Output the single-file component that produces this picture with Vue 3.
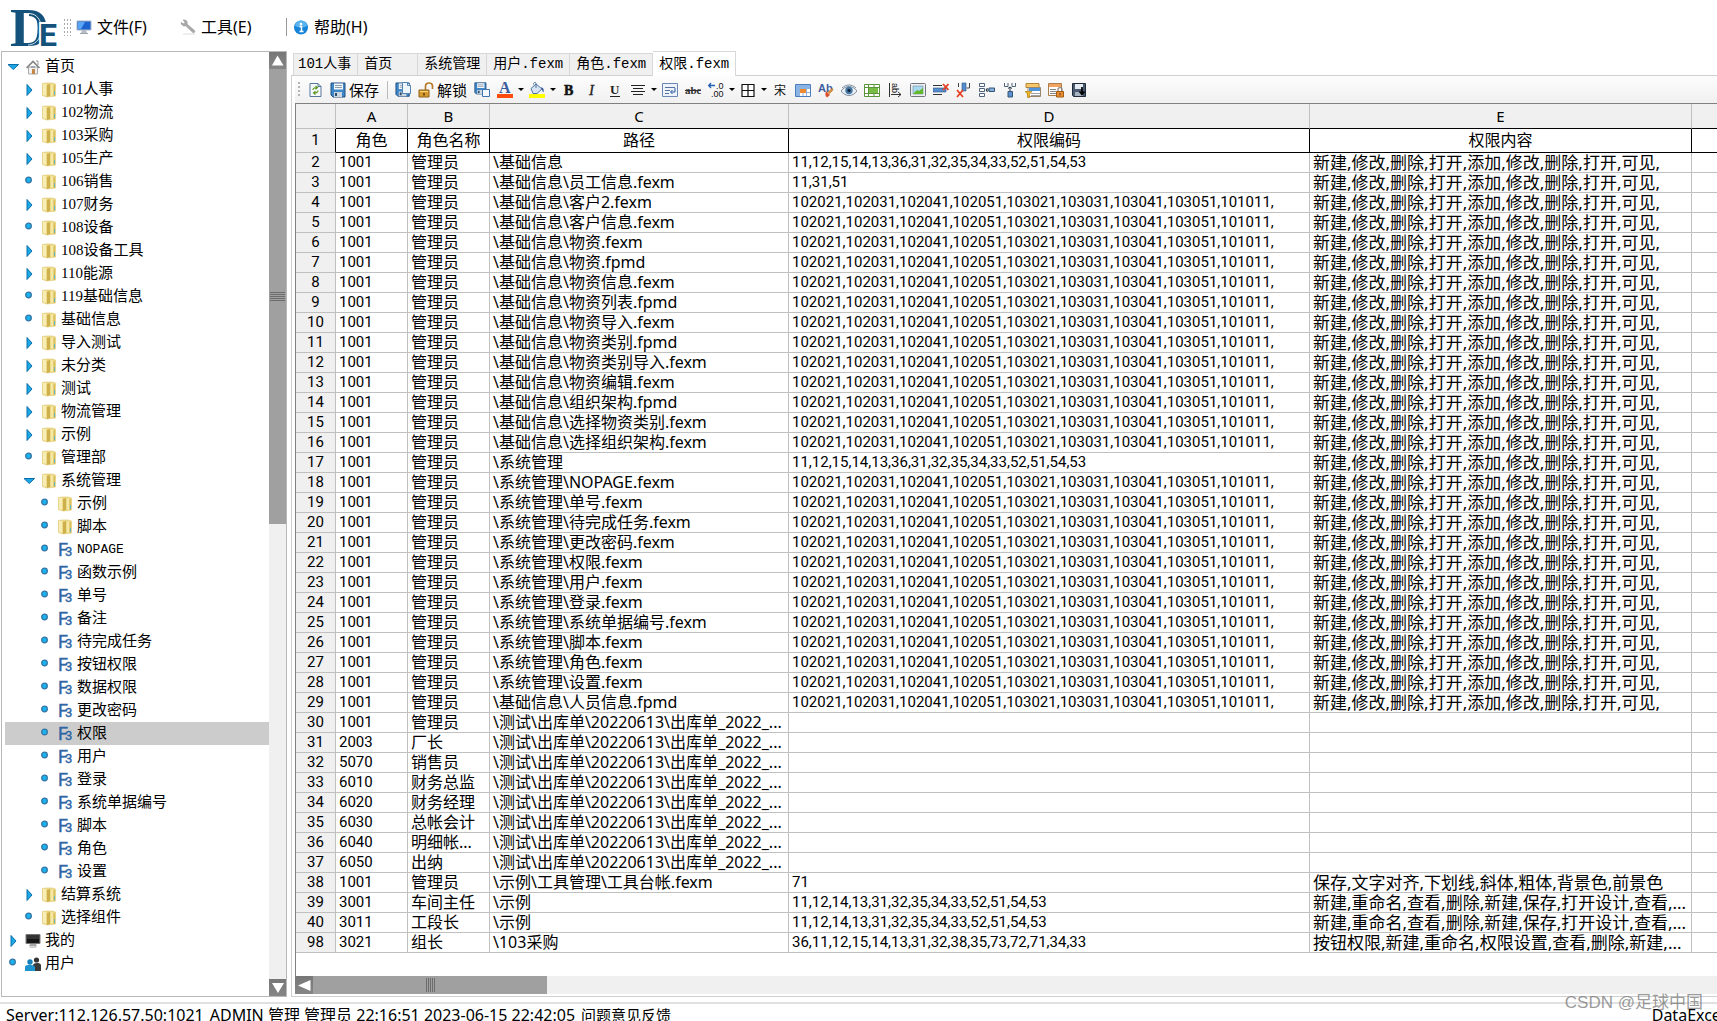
<template>
  <div class="app">
    <header class="menu-bar">
      <svg class="logo" viewBox="0 0 48 48" width="48" height="48" role="img" aria-label="DE">
        <text class="logo-d" x="0" y="43">D</text>
        <path d="M19 12c15 0 15 29 0 29" fill="none" stroke="#14527c" stroke-width="2" />
        <path d="M18 10.500c18-1 18 31 0 31.500" fill="none" stroke="#fff" stroke-width=".8" />
        <text class="logo-e" x="29" y="43">E</text>
      </svg>
      <span class="menu-grip"></span>
      <button class="menu-item menu-item--file" type="button">
        <svg viewBox="0 0 16 16" width="16" height="16" v-html="icons.monitor"></svg>文件(F)
      </button>
      <button class="menu-item menu-item--tool" type="button">
        <svg viewBox="0 0 16 16" width="16" height="16" v-html="icons.wrench"></svg>工具(E)
      </button>
      <span class="menu-line"></span>
      <button class="menu-item" type="button">
        <svg viewBox="0 0 16 16" width="16" height="16" v-html="icons.info"></svg>帮助(H)
      </button>
    </header>

    <main class="main">
      <aside class="sidebar">
        <ul class="tree">
          <li
            v-for="(node, i) in nodes"
            :key="i"
            class="tree__row"
            :class="[`tree__row--l${node.level}`, { 'tree__row--active': i === activeNode }]"
            @click="activeNode = i"
          >
            <svg class="tree__mark" viewBox="0 0 16 16" width="16" height="16" v-html="icons[node.mark]"></svg>
            <svg class="tree__icon" viewBox="0 0 16 16" width="16" height="16" v-html="icons[node.icon]"></svg>
            <span :class="{ mono: node.mono }">{{ node.text }}</span>
          </li>
        </ul>
        <div class="vscroll">
          <button class="scroll-btn" type="button" aria-label="向上">
            <svg viewBox="0 0 17 17" width="17" height="17"><path d="M8.500 3.500 14.500 13.500H3z" fill="#fff" /></svg>
          </button>
          <div class="vscroll__track">
            <div class="vscroll__thumb"><i v-for="n in 5" :key="n"></i></div>
          </div>
          <button class="scroll-btn" type="button" aria-label="向下">
            <svg viewBox="0 0 17 17" width="17" height="17"><path d="M3 4H15L9 14z" fill="#fff" /></svg>
          </button>
        </div>
      </aside>

      <section class="content">
        <div class="tabs" role="tablist">
          <button
            v-for="(tab, i) in tabs"
            :key="tab"
            class="tab"
            :class="{ 'tab--active': i === activeTab }"
            type="button"
            role="tab"
            :aria-selected="i === activeTab"
            @click="activeTab = i"
          >{{ tab }}</button>
        </div>

        <div class="panel">
          <div class="toolbar">
            <span class="toolbar__grip"></span>
            <template v-for="(tool, i) in tools" :key="i">
              <span v-if="tool.icon === 'sep'" class="toolbar__sep"></span>
              <button v-else-if="tool.icon === 'caret'" class="caret" type="button" aria-label="更多"></button>
              <button v-else class="tool" type="button" :aria-label="tool.name">
                <svg viewBox="0 0 16 16" width="16" height="16" v-html="icons[tool.icon]"></svg>
                <span v-if="tool.text" class="tool__text">{{ tool.text }}</span>
              </button>
            </template>
          </div>

          <div class="sheet">
            <table class="grid">
              <colgroup>
                <col class="col-n" /><col class="col-a" /><col class="col-b" /><col class="col-c" />
                <col class="col-d" /><col class="col-e" /><col />
              </colgroup>
              <thead>
                <tr>
                  <th class="corner"></th>
                  <th v-for="c in ['A', 'B', 'C', 'D', 'E', '']" :key="c" scope="col">{{ c }}</th>
                </tr>
              </thead>
              <tbody>
                <tr class="title-row">
                  <th scope="row">1</th>
                  <td>角色</td>
                  <td>角色名称</td>
                  <td>路径</td>
                  <td>权限编码</td>
                  <td>权限内容</td>
                  <td></td>
                </tr>
                <tr v-for="row in rows" :key="row[0]">
                  <th scope="row">{{ row[0] }}</th>
                  <td class="num">{{ row[1] }}</td>
                  <td>{{ row[2] }}</td>
                  <td>{{ row[3] }}</td>
                  <td class="num">{{ row[4] }}</td>
                  <td class="perm">{{ row[5] }}</td>
                  <td></td>
                </tr>
              </tbody>
            </table>
          </div>

          <div class="hscroll">
            <button class="scroll-btn scroll-btn--left" type="button" aria-label="向左">
              <svg viewBox="0 0 18 18" width="18" height="18"><path d="M3 9.500 15.500 4V15z" fill="#fff" /></svg>
            </button>
            <div class="hscroll__track">
              <div class="hscroll__thumb"><i v-for="n in 5" :key="n"></i></div>
            </div>
          </div>
        </div>
      </section>
    </main>

    <footer class="status">
      <span>Server:112.126.57.50:1021</span>
      <span>ADMIN 管理 管理员 22:16:51 2023-06-15 22:42:05</span>
      <a href="#">问题意见反馈</a>
      <span class="status__brand">DataExcel</span>
    </footer>
    <div class="watermark">CSDN @足球中国</div>
  </div>
</template>

<script setup>
import { ref } from 'vue'

const floppy = (x, y, s) =>
  `<g transform="translate(${x} ${y}) scale(${s})"><path d="M1 1h14v14H3l-2-2z" fill="#3d86c8" stroke="#24507f"/><path d="M4 1.500h9v6H4z" fill="#f4f8fc"/><path d="M5 3.500h7M5 5.500h7" stroke="#8a9aaa"/><path d="M4 10h8v5H4z" fill="#cdd6de"/><path d="M5 11h2v3H5z" fill="#2c4d70"/></g>`

const icons = {
  monitor:
    '<path d="M1 2h14v9H1z" fill="#1c63cf" stroke="#a9b7c6"/><path d="M2 3h7L5 10H2z" fill="#5aa6f4"/><path d="M6 11h4l1 3H5z" fill="#b7bec6"/><path d="M4 14.500h8" stroke="#9aa2aa"/>',
  wrench:
    '<path d="M1 3.500 4 5l1-2-2-2c3-.6 5 1.300 4 4l7.500 6.500c1 1.500-.8 3-2 1.800L5.800 6.800C3.600 7.600 1.300 6.300 1 3.500z" fill="#a9a9a9" stroke="#8a8a8a" stroke-width=".5"/><path d="M3 15h12" stroke="#ddd"/>',
  info:
    '<circle cx="8" cy="8.500" r="7" fill="#1684d6"/><path d="M2 7a6 5.500 0 0 1 12 0c-4 2-8 2-12 0z" fill="#59b4ee"/><circle cx="8" cy="5" r="1.300" fill="#fff"/><path d="M6.500 7.500h2v5M6.500 12.500h4" fill="none" stroke="#fff" stroke-width="1.500"/>',
  open: '<path d="M3 5.500h10.500L8.300 10.500z" fill="#1ba8e8" stroke="#0c6ea8"/>',
  closed: '<path d="M6 2.500 11 8 6 13.500z" fill="#1ba8e8" stroke="#0c6ea8"/>',
  dot: '<circle cx="7.500" cy="6" r="2.800" fill="#19b4ee" stroke="#3474a6" stroke-width="1.300"/>',
  home:
    '<path d="M3.500 8h9v7h-9z" fill="#f2f2f2" stroke="#a9a9a9"/><path d="M1.500 9 8 2.500 14.500 9" fill="none" stroke="#858585" stroke-width="1.700"/><path d="M11 2h2v4" fill="none" stroke="#999"/><path d="M7 10h3v5H7z" fill="#c4874a"/><path d="M6 7h4v2H6z" fill="#9fa7ad"/>',
  folder:
    '<path d="M1.500 1.500 6 1h5l3.500 1v12L6 15l-4.500-1.500z" fill="#ecd98a" stroke="#e2cc75" stroke-width=".7"/><path d="M2 2h3v11.500L2 13z" fill="#f8edb4"/><path d="M6 3 9 2v12l-3 1z" fill="#cdb04c"/><path d="M10 2.500h2v11h-2z" fill="#f5e7a4"/><path d="M12.500 3H14v11h-1.500z" fill="#dabf58"/><path d="M13.500 9v4" stroke="#62b5c4"/>',
  form: '<text x="1" y="14" font-family="Roboto, sans-serif" font-size="18" fill="#2f66a5" stroke="#2f66a5" stroke-width=".4">F</text><text x="8" y="14" font-family="Roboto, sans-serif" font-size="13" fill="#2f66a5" stroke="#2f66a5" stroke-width=".4">3</text>',
  computer:
    '<path d="M1 1.500h14v9H1z" fill="#343434" stroke="#777"/><path d="M2 6h12v4H2z" fill="#161616"/><path d="M5 11h6l1 2.500H4z" fill="#a7a7a7"/><path d="M5 14.500h6" stroke="#ccc"/>',
  users:
    '<circle cx="11.500" cy="4" r="2.600" fill="#333"/><path d="M8 15V9c0-2 7-3 8 0v6z" fill="#3a3a3a"/><circle cx="5" cy="6" r="2.700" fill="#1780b9"/><path d="M0 15v-4c0-3 9-3 10 0v4z" fill="#1c93cc"/>',
  refresh:
    '<path d="M3 1.500h8l3 3v10H3z" fill="#f6fafd" stroke="#56779a"/><path d="M11 1.500v3h3" fill="none" stroke="#56779a"/><path d="M6 8c0-2 2-2.500 4-2.500M8.500 4l2 1.500-2 1.800M11 8.500c0 2-2 2.500-4 2.500M8.500 9.200 6.500 11l2 1.600" fill="none" stroke="#5d9a22" stroke-width="1.200"/>',
  save: floppy(0, 0, 1),
  saveDoc:
    floppy(0, 0, 0.95) + '<path d="M7.500.5h5l3 3v8h-8z" fill="#eef5fc" stroke="#5484b6"/><path d="M12.500.5v3h3" fill="none" stroke="#5484b6"/>',
  unlock:
    '<path d="M7.500 8V4c0-4 7-4 7 0v3" fill="none" stroke="#b57b2c" stroke-width="1.700"/><path d="M1 8h10v7H1z" fill="#d79a2c" stroke="#90601b"/><path d="M2 9.500h8" stroke="#f6d67a"/><path d="M6 11v2.500" stroke="#5a3a10" stroke-width="1.500"/>',
  saveCopy: floppy(0, 0, 0.8) + '<path d="M8.500 7.500h7v7h-7z" fill="#f5f9fd" stroke="#3e75af"/>',
  fontColor:
    '<text x="2" y="11" font-family="Liberation Serif, serif" font-weight="700" font-size="16" fill="#395a9b">A</text><path d="M0 12h16v4H0z" fill="#ff4c0c"/>',
  fill:
    '<path d="M2 6.500 7 2l6 5-5 4.500H4z" fill="#d5e3f2" stroke="#4d73a4"/><path d="M7 6V1.500c0-2-3-1-2.500 1" fill="none" stroke="#54749b"/><path d="M12 5c3 1 3 3 2.500 5.500-1.500-1-1-3-2.500-5.500z" fill="#355d9d"/><path d="M0 12h16v4H0z" fill="#ff0"/>',
  bold: '<text x="3" y="13" font-family="Liberation Serif, serif" font-weight="700" font-size="14" fill="#111" stroke="#111" stroke-width=".5">B</text>',
  italic: '<text x="5" y="13" font-family="Liberation Serif, serif" font-style="italic" font-size="15" fill="#222" stroke="#222" stroke-width=".3">I</text>',
  underline:
    '<text x="3" y="12" font-family="Liberation Serif, serif" font-weight="700" font-size="13" fill="#222">U</text><path d="M3 14.500h10" stroke="#222"/>',
  align: '<path d="M1 3.500h14M3 6.500h10M1 9.500h14M3 12.500h10" stroke="#222" stroke-width="1.200"/>',
  wrap:
    '<path d="M.5 1.500h15v13H.5z" fill="#eef3fa" stroke="#6d87b5"/><path d="M3 5.500h10M3 8.500h5M3 11.500h4" stroke="#58729f"/><path d="M13 6v4H9M10.500 8l-2 2 2 2" fill="none" stroke="#2659a5"/>',
  strike:
    '<text x="0" y="12" font-family="Liberation Serif, serif" font-weight="700" font-size="11" fill="#333">abc</text><path d="M0 8.500h16" stroke="#333"/>',
  decimal:
    '<text x="8" y="7" font-family="Liberation Sans, sans-serif" font-size="9" fill="#111">.0</text><text x="3" y="15" font-family="Liberation Sans, sans-serif" font-size="9" fill="#111">.00</text><path d="M7 3.500H1M3 1 .7 3.500 3 6" fill="none" stroke="#2360b5" stroke-width="1.300"/>',
  border: '<path d="M2 2.500h12v12H2zM8 2.500v12M2 8.500h12" fill="#fff" stroke="#111" stroke-width="1.200"/>',
  font: '<text x="2" y="13" font-family="Noto Sans CJK SC, sans-serif" font-size="12" fill="#111">宋</text>',
  table:
    '<path d="M.5 2.500h15v12H.5z" fill="#fff" stroke="#4c7dbd"/><path d="M1 3h14v3H1zM1 3h3v11H1z" fill="#8ab4e8"/><path d="M1 6.500h14M1 10.500h14M4.500 3v11M8 3v11M11.500 3v11" stroke="#8fb2dc"/><path d="M5 7h6v4H5z" fill="#f18a2e"/>',
  style:
    '<text x="0" y="10" font-family="Liberation Sans, sans-serif" font-weight="700" font-size="11" fill="#3c5fa0">Ab</text><path d="m14.500 6 1 2-4 4-2-2z" fill="#d58a3d"/><path d="m8 9 4 4-3 2.500C7 14 7 12 8 9z" fill="#d9502c"/>',
  eye:
    '<path d="M0 9c4-6 12-6 16 0-4 6-12 6-16 0z" fill="#e8edf2" stroke="#8090a2"/><circle cx="8" cy="8.500" r="3.700" fill="#487aa8"/><circle cx="8" cy="8.500" r="1.700" fill="#172b40"/><path d="M1 6c4-4 10-4 14 0" fill="none" stroke="#8090a2"/>',
  merge:
    '<path d="M.5 2.500h15v12H.5z" fill="#fff" stroke="#5a9438"/><path d="M.5 5.500h15M.5 11.500h15M4.500 2.500v12M10 2.500v3M10 11.500v3" stroke="#5a9438"/><path d="M5 6h9v5H5z" fill="#77bd43"/>',
  rotate:
    '<path d="M2.500 1v14" stroke="#333"/><text transform="translate(5 1) rotate(90)" x="0" y="0" font-family="Liberation Sans, sans-serif" font-size="9" fill="#111">ab</text><path d="M4 12.500h10M11 10l3 2.500-3 2.500" fill="none" stroke="#333"/>',
  picture:
    '<rect x=".5" y="1.500" width="15" height="13" rx="1" fill="#eee" stroke="#6e7580"/><path d="M3 4h10v8H3z" fill="#a8d7f1" stroke="#6b8b9e" stroke-width=".6"/><path d="m3 12 4-4 2 1 4-3v6z" fill="#62b72d"/>',
  delRow:
    '<path d="M0 3.500h9M0 12.500h9" stroke="#333"/><path d="M0 6h13v4H0z" fill="#568dcc" stroke="#2c5688" stroke-width=".6"/><path d="m10 2 5.500 6M15.500 2 10 8" stroke="#e63c20" stroke-width="1.700"/>',
  delCol:
    '<path d="M2.500 1v4M13.500 1v5h-3" fill="none" stroke="#444"/><path d="M6 1h4v8H6z" fill="#568dcc" stroke="#2c5688" stroke-width=".6"/><path d="m1 8 6 7M7 8l-6 7" stroke="#e63c20" stroke-width="1.800"/>',
  insRow:
    '<path d="M.5 1.500h5v3h-5zM.5 6.500h5v3h-5zM.5 11.500h5v3h-5z" fill="#fff" stroke="#50657c"/><path d="M10 6h5.500v3.500H10z" fill="#83afd9" stroke="#345779"/><path d="M10 8H7M8.500 6 7 8l1.500 2" fill="none" stroke="#234"/>',
  insCol:
    '<path d="M2.500 1v3.500H6V1M10 1v3.500h3.500V1" fill="none" stroke="#50657c"/><path d="M6 9.500h4.500V15H6z" fill="#5d91cd" stroke="#345779"/><path d="M8 9V5M6 6.500 8 5l2 1.500" fill="none" stroke="#234"/>',
  filter:
    '<path d="M1 1.500h13v4H1z" fill="#f7c86b" stroke="#b58333"/><path d="M3 5.500h12.500v9H3z" fill="#fff" stroke="#9a876a"/><path d="M4 6h11v3H4z" fill="#4f94df"/><path d="M6 11.500h9M6 13.500h9" stroke="#a2a2a2"/><path d="M0 9.500h7L4.500 12v3.500h-2V12z" fill="#f2b51d" stroke="#a87509" stroke-width=".6"/>',
  lockTable:
    '<path d="M.5 1.500h13v12H.5z" fill="#fff" stroke="#a97e4e"/><path d="M1 2h12v3H1z" fill="#f2a35f"/><path d="M2 7.500h6M2 9.500h6M2 11.500h6" stroke="#888"/><path d="M10 9V7.500c0-2.500 4-2.500 4 0V9" fill="none" stroke="#888" stroke-width="1.300"/><path d="M8.500 9.500h7v5.500h-7z" fill="#e89031" stroke="#a25b11"/><path d="M12 11v2.500" stroke="#633"/>',
  exportFile:
    '<path d="M1.500 1.500h13v13h-12l-1-1z" fill="#4a5b72" stroke="#202b3a"/><path d="M4 2h8v5H4z" fill="#e4ebf3"/><path d="M4 10h8v4H4z" fill="#a8b4c2"/><path d="M11 5v7M8.500 9.500 11 12.500l2.500-3" fill="none" stroke="#000" stroke-width="1.700"/>'
}

const node = (level, mark, icon, text) => ({ level, mark, icon, text })

const nodes = [
  node(0, 'open', 'home', '首页'),
  node(1, 'closed', 'folder', '101人事'),
  node(1, 'closed', 'folder', '102物流'),
  node(1, 'closed', 'folder', '103采购'),
  node(1, 'closed', 'folder', '105生产'),
  node(1, 'dot', 'folder', '106销售'),
  node(1, 'closed', 'folder', '107财务'),
  node(1, 'dot', 'folder', '108设备'),
  node(1, 'closed', 'folder', '108设备工具'),
  node(1, 'closed', 'folder', '110能源'),
  node(1, 'dot', 'folder', '119基础信息'),
  node(1, 'dot', 'folder', '基础信息'),
  node(1, 'closed', 'folder', '导入测试'),
  node(1, 'closed', 'folder', '未分类'),
  node(1, 'closed', 'folder', '测试'),
  node(1, 'closed', 'folder', '物流管理'),
  node(1, 'closed', 'folder', '示例'),
  node(1, 'dot', 'folder', '管理部'),
  node(1, 'open', 'folder', '系统管理'),
  node(2, 'dot', 'folder', '示例'),
  node(2, 'dot', 'folder', '脚本'),
  { ...node(2, 'dot', 'form', 'NOPAGE'), mono: true },
  node(2, 'dot', 'form', '函数示例'),
  node(2, 'dot', 'form', '单号'),
  node(2, 'dot', 'form', '备注'),
  node(2, 'dot', 'form', '待完成任务'),
  node(2, 'dot', 'form', '按钮权限'),
  node(2, 'dot', 'form', '数据权限'),
  node(2, 'dot', 'form', '更改密码'),
  node(2, 'dot', 'form', '权限'),
  node(2, 'dot', 'form', '用户'),
  node(2, 'dot', 'form', '登录'),
  node(2, 'dot', 'form', '系统单据编号'),
  node(2, 'dot', 'form', '脚本'),
  node(2, 'dot', 'form', '角色'),
  node(2, 'dot', 'form', '设置'),
  node(1, 'closed', 'folder', '结算系统'),
  node(1, 'dot', 'folder', '选择组件'),
  node(0, 'closed', 'computer', '我的'),
  node(0, 'dot', 'users', '用户')
]
const activeNode = ref(29)

const tabs = ['101人事', '首页', '系统管理', '用户.fexm', '角色.fexm', '权限.fexm']
const activeTab = ref(5)

const tools = [
  { icon: 'refresh', name: '刷新' },
  { icon: 'save', text: '保存' },
  { icon: 'sep' },
  { icon: 'saveDoc', name: '另存为' },
  { icon: 'unlock', text: '解锁' },
  { icon: 'saveCopy', name: '保存副本' },
  { icon: 'fontColor', name: '前景色' },
  { icon: 'caret' },
  { icon: 'fill', name: '背景色' },
  { icon: 'caret' },
  { icon: 'bold', name: '粗体' },
  { icon: 'italic', name: '斜体' },
  { icon: 'underline', name: '下划线' },
  { icon: 'align', name: '文字对齐' },
  { icon: 'caret' },
  { icon: 'wrap', name: '自动换行' },
  { icon: 'strike', name: '删除线' },
  { icon: 'decimal', name: '小数位' },
  { icon: 'caret' },
  { icon: 'border', name: '边框' },
  { icon: 'caret' },
  { icon: 'font', name: '字体' },
  { icon: 'table', name: '表格' },
  { icon: 'style', name: '样式' },
  { icon: 'eye', name: '预览' },
  { icon: 'merge', name: '合并单元格' },
  { icon: 'rotate', name: '文字方向' },
  { icon: 'picture', name: '图片' },
  { icon: 'delRow', name: '删除行' },
  { icon: 'delCol', name: '删除列' },
  { icon: 'insRow', name: '插入行' },
  { icon: 'insCol', name: '插入列' },
  { icon: 'filter', name: '筛选' },
  { icon: 'lockTable', name: '锁定表格' },
  { icon: 'exportFile', name: '导出' }
]

const folderCodes = '11,12,15,14,13,36,31,32,35,34,33,52,51,54,53'
const fileCodes = '102021,102031,102041,102051,103021,103031,103041,103051,101011,'
const perms = '新建,修改,删除,打开,添加,修改,删除,打开,可见,'
const stockPath = '\\测试\\出库单\\20220613\\出库单_2022_...'

const adminPaths = [
  '\\基础信息',
  '\\基础信息\\员工信息.fexm',
  '\\基础信息\\客户2.fexm',
  '\\基础信息\\客户信息.fexm',
  '\\基础信息\\物资.fexm',
  '\\基础信息\\物资.fpmd',
  '\\基础信息\\物资信息.fexm',
  '\\基础信息\\物资列表.fpmd',
  '\\基础信息\\物资导入.fexm',
  '\\基础信息\\物资类别.fpmd',
  '\\基础信息\\物资类别导入.fexm',
  '\\基础信息\\物资编辑.fexm',
  '\\基础信息\\组织架构.fpmd',
  '\\基础信息\\选择物资类别.fexm',
  '\\基础信息\\选择组织架构.fexm',
  '\\系统管理',
  '\\系统管理\\NOPAGE.fexm',
  '\\系统管理\\单号.fexm',
  '\\系统管理\\待完成任务.fexm',
  '\\系统管理\\更改密码.fexm',
  '\\系统管理\\权限.fexm',
  '\\系统管理\\用户.fexm',
  '\\系统管理\\登录.fexm',
  '\\系统管理\\系统单据编号.fexm',
  '\\系统管理\\脚本.fexm',
  '\\系统管理\\角色.fexm',
  '\\系统管理\\设置.fexm',
  '\\基础信息\\人员信息.fpmd'
]

const codesFor = (path) => {
  if (path.endsWith('员工信息.fexm')) return '11,31,51'
  return path.includes('.') ? fileCodes : folderCodes
}

const rows = [
  ...adminPaths.map((path, i) => [i + 2, '1001', '管理员', path, codesFor(path), perms]),
  [30, '1001', '管理员', stockPath, '', ''],
  [31, '2003', '厂长', stockPath, '', ''],
  [32, '5070', '销售员', stockPath, '', ''],
  [33, '6010', '财务总监', stockPath, '', ''],
  [34, '6020', '财务经理', stockPath, '', ''],
  [35, '6030', '总帐会计', stockPath, '', ''],
  [36, '6040', '明细帐...', stockPath, '', ''],
  [37, '6050', '出纳', stockPath, '', ''],
  [38, '1001', '管理员', '\\示例\\工具管理\\工具台帐.fexm', '71', '保存,文字对齐,下划线,斜体,粗体,背景色,前景色'],
  [39, '3001', '车间主任', '\\示例', '11,12,14,13,31,32,35,34,33,52,51,54,53', '新建,重命名,查看,删除,新建,保存,打开设计,查看,...'],
  [40, '3011', '工段长', '\\示例', '11,12,14,13,31,32,35,34,33,52,51,54,53', '新建,重命名,查看,删除,新建,保存,打开设计,查看,...'],
  [98, '3021', '组长', '\\103采购', '36,11,12,15,14,13,31,32,38,35,73,72,71,34,33', '按钮权限,新建,重命名,权限设置,查看,删除,新建,...']
]
</script>

<style>
body {
  margin: 0;
  overflow: hidden;
}
</style>

<style scoped>
.app {
  position: relative;
  display: flex;
  flex-direction: column;
  height: 100vh;
  overflow: hidden;
  background: #fff;
  color: #000;
  font-family: "Noto Sans", "Noto Sans CJK SC", sans-serif;
  font-size: 15px;
}

button {
  padding: 0;
  border: 0;
  background: none;
  color: inherit;
  font: inherit;
}

svg {
  flex: none;
  display: block;
}

.menu-bar {
  flex: none;
  display: flex;
  align-items: center;
  box-sizing: border-box;
  height: 51px;
  padding: 3px 0 0 10px;
  font-size: 16px;
}

.logo {
  overflow: visible;
}

.logo text {
  fill: #14527c;
  font-weight: 700;
}

.logo .logo-d {
  font-family: "Liberation Serif", serif;
  font-size: 54px;
}

.logo .logo-e {
  font-family: Roboto, sans-serif;
  font-size: 32px;
  stroke: #fff;
  stroke-width: 4px;
  paint-order: stroke;
}

.menu-grip {
  width: 7px;
  height: 17px;
  margin: 0 5px 0 6px;
  background: repeating-linear-gradient(#aaa 0 2px, transparent 2px 4px);
  mask: repeating-linear-gradient(90deg, #000 0 1px, transparent 1px 3px);
}

.menu-item {
  display: flex;
  align-items: center;
  gap: 5px;
  height: 24px;
  line-height: 24px;
  white-space: nowrap;
}

.menu-item--file {
  width: 104px;
}

.menu-item--tool {
  width: 106px;
}

.menu-line {
  width: 1px;
  height: 18px;
  margin-right: 6px;
  background: #999;
}

.main {
  flex: 1;
  display: flex;
  min-height: 0;
  margin-bottom: 5px;
}

.sidebar {
  flex: none;
  display: flex;
  width: 284px;
  margin-left: 1px;
  border: 1px solid #b8b8b8;
  box-sizing: content-box;
}

.tree {
  flex: 1;
  margin: 0;
  padding: 3px 0 0 3px;
  list-style: none;
  overflow: hidden;
  font-family: "Liberation Serif", "Noto Sans CJK SC", serif;
  font-size: 15px;
}

.tree__row {
  display: flex;
  align-items: center;
  gap: 4px;
  height: 23px;
  line-height: 23px;
  white-space: nowrap;
}

.tree__row--l1 {
  padding-left: 16px;
}

.tree__row--l2 {
  padding-left: 32px;
}

.tree__row--active {
  background: #ccc;
}

.mono {
  font-family: "Liberation Mono", monospace;
  font-size: 13px;
}

.vscroll {
  display: flex;
  flex-direction: column;
  width: 17px;
}

.scroll-btn {
  flex: none;
  width: 17px;
  height: 17px;
  background: linear-gradient(#777, #858585);
}

.scroll-btn--left {
  width: 18px;
  height: 18px;
}

.vscroll__track {
  flex: 1;
  background: #f0f0f0;
}

.vscroll__thumb {
  display: flex;
  flex-direction: column;
  align-items: center;
  justify-content: center;
  gap: 1px;
  height: 50%;
  background: #a0a0a0;
}

.vscroll__thumb i {
  width: 15px;
  height: 1px;
  background: #6c6c6c;
}

.content {
  flex: 1;
  display: flex;
  flex-direction: column;
  min-width: 0;
  margin-left: 4px;
}

.tabs {
  flex: none;
  display: flex;
  align-items: flex-end;
  height: 24px;
  padding-left: 2px;
  font-family: "Liberation Mono", "Noto Sans CJK SC", monospace;
  font-size: 14px;
}

.tab {
  min-width: 60px;
  height: 22px;
  padding: 0 6px;
  border: 1px solid #d8d8d8;
  border-width: 1px 1px 0 0;
  background: #f0f0f0;
  line-height: 21px;
  text-align: left;
  white-space: nowrap;
}

.tab:first-child {
  padding-left: 4px;
  border-left-width: 1px;
}

.tab--active {
  z-index: 1;
  height: 25px;
  margin-bottom: -1px;
  background: #fff;
  line-height: 22px;
}

.panel {
  flex: 1;
  display: flex;
  flex-direction: column;
  min-height: 0;
  padding: 0 0 2px 3px;
  border: 1px solid #d0d0d0;
  border-right: 0;
}

.toolbar {
  flex: none;
  display: flex;
  align-items: center;
  height: 27px;
  background: linear-gradient(#fdfdfd, #f0f0f0);
}

.toolbar__grip {
  width: 2px;
  height: 16px;
  margin: 0 3px;
  background: repeating-linear-gradient(#b5b5b5 0 2px, transparent 2px 4px);
}

.tool {
  display: flex;
  align-items: center;
  gap: 3px;
  height: 24px;
  padding: 0 3px 0 4px;
}

.tool__text {
  font-family: "Noto Sans CJK SC", sans-serif;
  line-height: 24px;
  white-space: nowrap;
}

.toolbar__sep {
  width: 1px;
  height: 18px;
  margin: 0 3px 0 5px;
  background: #bbb;
}

.caret {
  display: flex;
  width: 9px;
  justify-content: center;
}

.caret::after {
  content: '';
  border: 3px solid transparent;
  border-top-color: #000;
  border-bottom: 0;
}

.sheet {
  flex: 1;
  min-height: 0;
  overflow: hidden;
  border: 1px solid #808080;
  border-width: 1px 0 0 1px;
}

.grid {
  width: 100%;
  table-layout: fixed;
  border-collapse: separate;
  border-spacing: 0;
}

.col-n {
  width: 40px;
}

.col-a {
  width: 72px;
}

.col-b {
  width: 82px;
}

.col-c {
  width: 299px;
}

.col-d {
  width: 521px;
}

.col-e {
  width: 382px;
}

th,
td {
  box-sizing: border-box;
  height: 20px;
  padding: 0 0 0 3px;
  border: 1px solid #c0c0c0;
  border-width: 0 1px 1px 0;
  font-size: 16px;
  line-height: 19px;
  text-align: left;
  white-space: nowrap;
  overflow: hidden;
}

th {
  padding: 0;
  background: #f0f0f0;
  font-family: Roboto, sans-serif;
  font-size: 15px;
  font-weight: 400;
  text-align: center;
}

thead th {
  height: 25px;
  border-bottom-color: #000;
  font-family: "Noto Sans", sans-serif;
}

thead .corner {
  border-bottom-color: #c0c0c0;
}

.title-row th,
.title-row td {
  height: 24px;
  border-right-color: #000;
}

.title-row td {
  padding: 0;
  border-bottom-color: #000;
  text-align: center;
}

th:last-child,
td:last-child {
  border-right: 0;
}

.num {
  font-family: Roboto, sans-serif;
  font-size: 15px;
}

.perm {
  font-size: 17px;
}

.hscroll {
  flex: none;
  display: flex;
  height: 18px;
}

.hscroll__track {
  flex: 1;
  display: flex;
  background: #f0f0f0;
}

.hscroll__thumb {
  display: flex;
  align-items: center;
  justify-content: center;
  gap: 1px;
  width: 234px;
  background: #a0a0a0;
}

.hscroll__thumb i {
  width: 1px;
  height: 14px;
  background: #6c6c6c;
}

.status {
  flex: none;
  display: flex;
  gap: 6px;
  height: 17px;
  padding-left: 6px;
  border-top: 2px solid #e0e0e0;
  font-size: 16px;
  line-height: 22px;
  white-space: nowrap;
}

.status a {
  color: inherit;
  font-size: 15px;
  text-decoration: none;
}

.status__brand {
  margin-left: auto;
  margin-right: -8px;
}

.watermark {
  position: absolute;
  right: 14px;
  bottom: 7px;
  color: rgba(110, 110, 110, 0.7);
  font-family: "Liberation Sans", "Noto Sans CJK SC", sans-serif;
  font-size: 17px;
  line-height: 22px;
  pointer-events: none;
}
</style>
